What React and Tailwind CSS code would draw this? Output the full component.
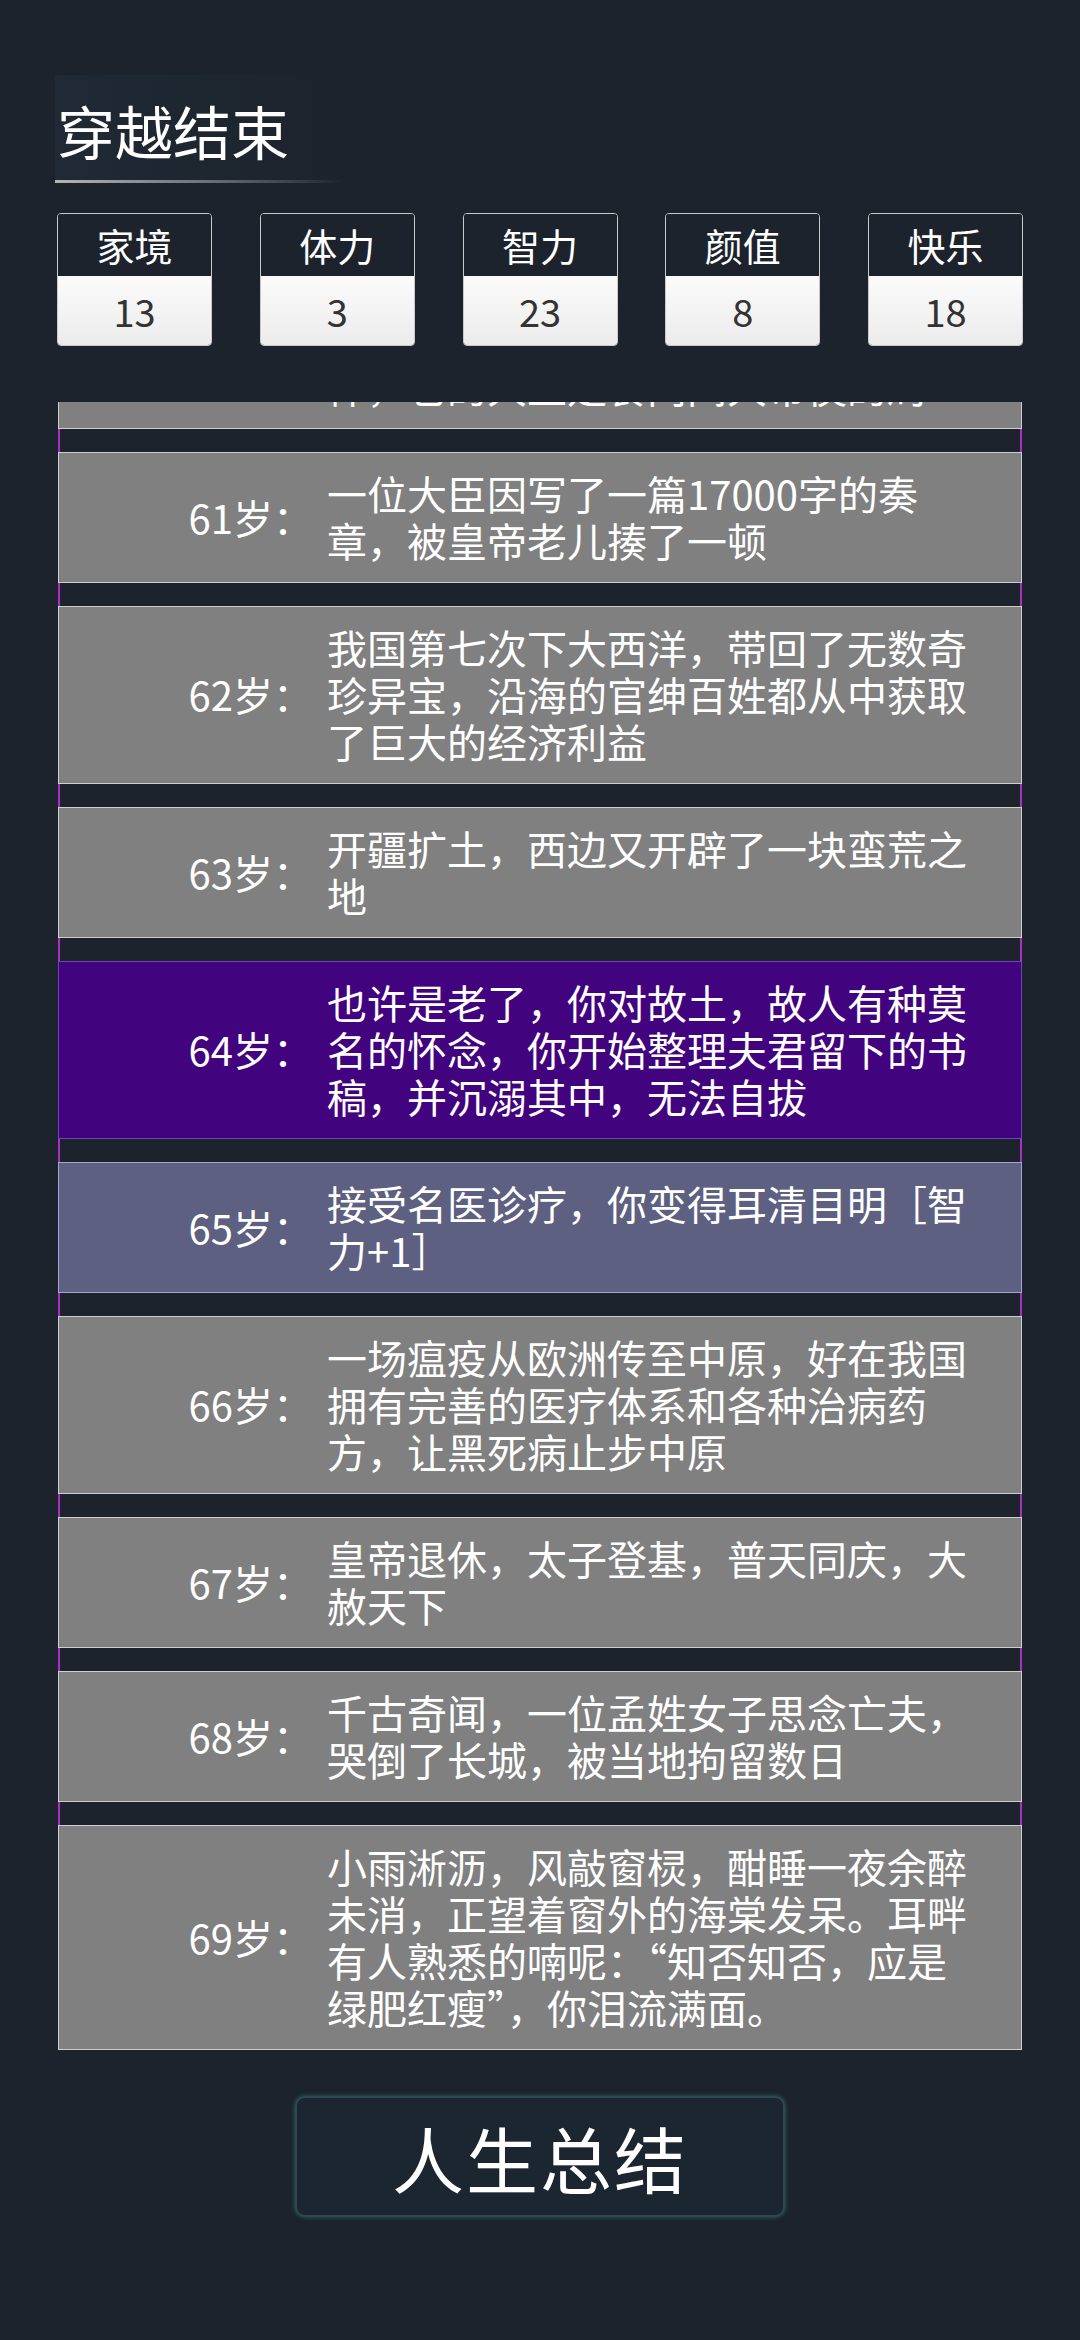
import React from 'react';

const stats = [
  { name: '家境', value: 13 },
  { name: '体力', value: 3 },
  { name: '智力', value: 23 },
  { name: '颜值', value: 8 },
  { name: '快乐', value: 18 },
];

// each event keeps its own line breaks, like the game's fixed-width text box
const events = [
  { age: 60, lines: ['西方传来消息，发生了一件离奇的事', '件，它的大王是食肉间大帝侯的局'] },
  { age: 61, lines: ['一位大臣因写了一篇17000字的奏', '章，被皇帝老儿揍了一顿'] },
  { age: 62, lines: ['我国第七次下大西洋，带回了无数奇', '珍异宝，沿海的官绅百姓都从中获取', '了巨大的经济利益'] },
  { age: 63, lines: ['开疆扩土，西边又开辟了一块蛮荒之', '地'] },
  { age: 64, kind: 'special', lines: ['也许是老了，你对故土，故人有种莫', '名的怀念，你开始整理夫君留下的书', '稿，并沉溺其中，无法自拔'] },
  { age: 65, kind: 'buff', lines: ['接受名医诊疗，你变得耳清目明［智', '力+1］'] },
  { age: 66, lines: ['一场瘟疫从欧洲传至中原，好在我国', '拥有完善的医疗体系和各种治病药', '方，让黑死病止步中原'] },
  { age: 67, lines: ['皇帝退休，太子登基，普天同庆，大', '赦天下'] },
  { age: 68, lines: ['千古奇闻，一位孟姓女子思念亡夫，', '哭倒了长城，被当地拘留数日'] },
  { age: 69, lines: ['小雨淅沥，风敲窗棂，酣睡一夜余醉', '未消，正望着窗外的海棠发呆。耳畔', '有人熟悉的喃呢：“知否知否，应是', '绿肥红瘦”，你泪流满面。'] },
];

const cardStyles = {
  normal: 'bg-[#808080] border-[#cfcfcf]',
  special: 'bg-[#42037e] border-[#7440c4]',
  buff: 'bg-[#5d6080] border-[#a3a6d2]',
};

function StatBox({ name, value }) {
  return (
    <div className="w-[155px] h-[133px] flex flex-col rounded-[4px] border border-[#c9c9c9]">
      <div className="h-[62px] flex items-center justify-center rounded-t-[3px] bg-[#1c232d] text-white text-[38px] leading-[48px]">
        {name}
      </div>
      <div className="flex-1 flex items-center justify-center rounded-b-[3px] bg-gradient-to-b from-[#fbfbfb] to-[#ececec] text-[#333] text-[38px] leading-[48px]">
        {value}
      </div>
    </div>
  );
}

function EventItem({ age, lines, kind = 'normal' }) {
  return (
    <div className="pt-[23px] border-x-2 border-[#a92fc0]">
      <div className={`-mx-[2px] flex items-center border pt-[17px] pb-[18px] ${cardStyles[kind]}`}>
        <div className="w-[254px] shrink-0 text-right text-white text-[40px] leading-[47px]">
          {age}岁：
        </div>
        <div className="ml-[14px] text-white text-[40px] leading-[47px]">
          {lines.map((l, i) => (
            <div key={i} className="whitespace-nowrap">{l}</div>
          ))}
        </div>
      </div>
    </div>
  );
}

export default function App() {
  return (
    <div
      className="min-h-[2340px] w-[1080px] bg-[#1c232d] overflow-hidden"
      style={{ fontFamily: '"Noto Sans CJK SC", "Noto Sans", sans-serif' }}
    >
      {/* title */}
      <div className="pt-[75px] pl-[55px]">
        <div className="w-[290px] bg-gradient-to-r from-[#202934] via-[#1e2630] to-transparent">
          <h1 className="pt-[26px] pl-[2px] text-white text-[58px] leading-[58px] font-normal">穿越结束</h1>
          <div className="mt-[21px] h-[3px] bg-gradient-to-r from-[#b5b5b5] via-[#6d747c] to-transparent" />
        </div>
      </div>

      {/* attributes */}
      <div className="mt-[30px] px-[57px] flex justify-between">
        {stats.map((s) => (
          <StatBox key={s.name} {...s} />
        ))}
      </div>

      {/* life log, scrolled to the end */}
      <div className="mt-[56px] mx-[58px] h-[1648px] overflow-hidden flex flex-col justify-end">
        {events.map((e) => (
          <EventItem key={e.age} {...e} />
        ))}
      </div>

      {/* summary button */}
      <div className="mt-[46px] flex justify-center">
        <button className="w-[490px] h-[121px] rounded-[10px] border-2 border-[#2d4753] bg-[#1c2630] shadow-[0_0_4px_#2c6a58] text-white text-[72px] leading-none tracking-[2px]">
          人生总结
        </button>
      </div>
    </div>
  );
}
